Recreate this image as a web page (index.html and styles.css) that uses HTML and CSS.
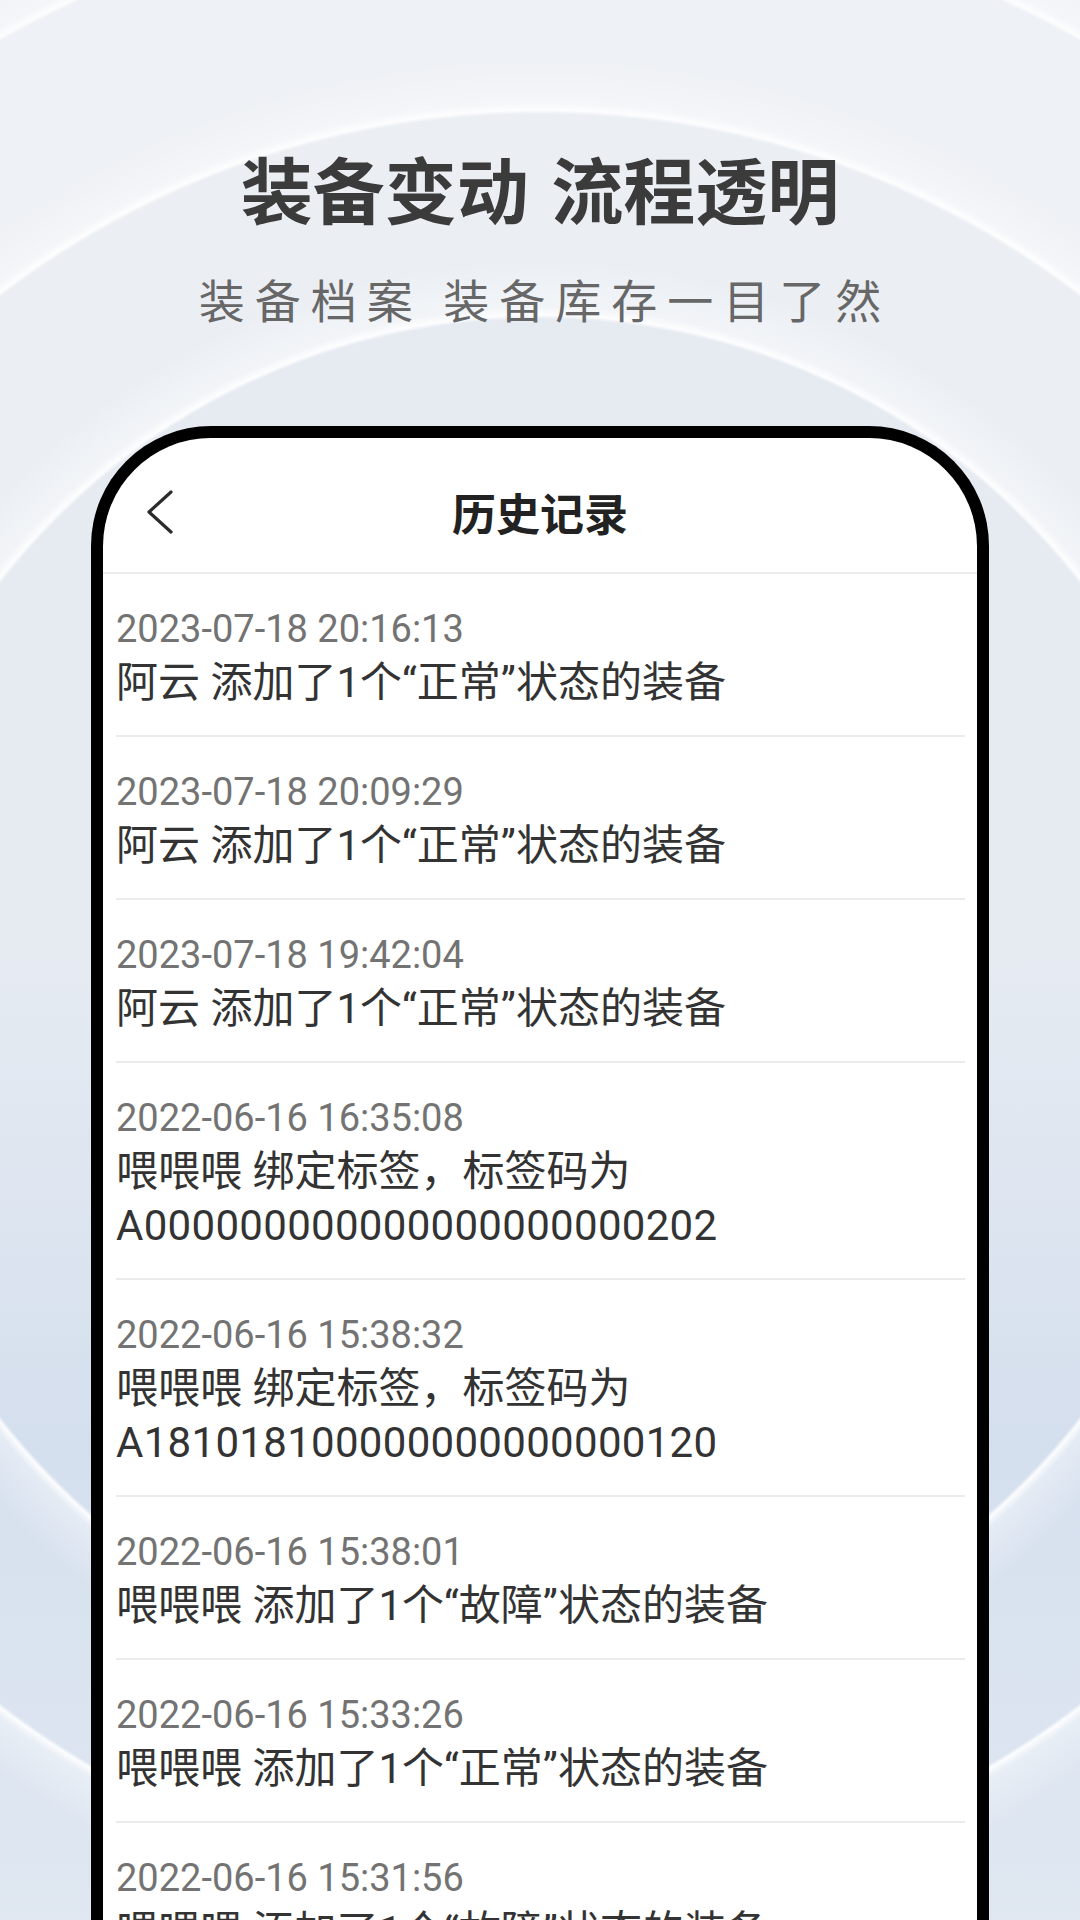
FILE: index.html
```html
<!DOCTYPE html>
<html lang="zh-CN">
<head>
  <meta charset="UTF-8" />
  <meta name="viewport" content="width=device-width, initial-scale=1" />
  <title>历史记录</title>
  <link rel="stylesheet" href="styles.css">
</head>
<body>
  <div class="intro">
    <h1 class="headline">装备变动 流程透明</h1>
    <p class="tagline">装备档案 装备库存一目了然</p>
  </div>

  <div class="phone">
    <div class="topbar">
      <a class="back" href="#">
        <svg width="28" height="44" viewBox="0 0 28 44">
          <path d="M25 2 L3 22 L25 42" fill="none" stroke="#2b2b2b" stroke-width="3.2" stroke-linecap="round" stroke-linejoin="round" />
        </svg>
      </a>
      <h2>历史记录</h2>
      <span></span>
    </div>

    <ul class="records">
      <li class="record">
        <div class="time">2023-07-18 20:16:13</div>
        <div class="desc">阿云 添加了1个“正常”状态的装备</div>
      </li>
      <li class="record">
        <div class="time">2023-07-18 20:09:29</div>
        <div class="desc">阿云 添加了1个“正常”状态的装备</div>
      </li>
      <li class="record">
        <div class="time">2023-07-18 19:42:04</div>
        <div class="desc">阿云 添加了1个“正常”状态的装备</div>
      </li>
      <li class="record">
        <div class="time">2022-06-16 16:35:08</div>
        <div class="desc">喂喂喂 绑定标签，标签码为<span class="code">A000000000000000000000202</span></div>
      </li>
      <li class="record">
        <div class="time">2022-06-16 15:38:32</div>
        <div class="desc">喂喂喂 绑定标签，标签码为<span class="code">A181018100000000000000120</span></div>
      </li>
      <li class="record">
        <div class="time">2022-06-16 15:38:01</div>
        <div class="desc">喂喂喂 添加了1个“故障”状态的装备</div>
      </li>
      <li class="record">
        <div class="time">2022-06-16 15:33:26</div>
        <div class="desc">喂喂喂 添加了1个“正常”状态的装备</div>
      </li>
      <li class="record">
        <div class="time">2022-06-16 15:31:56</div>
        <div class="desc">喂喂喂 添加了1个“故障”状态的装备</div>
      </li>
    </ul>
  </div>
</body>
</html>
```

FILE: styles.css
```css
:root {
  --texto: #333;
  --cinza: #737373;
  --linha: #ebebeb;
}
* {
  margin: 0;
  padding: 0;
  box-sizing: border-box;
}
html, body {
  width: 1080px;
  height: 1920px;
  overflow: hidden;
}
body {
  font-family: "Noto Sans CJK SC", sans-serif;
  color: var(--texto);
  background:
    radial-gradient(circle at 540px 1000px, transparent 681px, rgba(255,255,255,0.9) 685px, rgba(255,255,255,0.35) 693px, rgba(255,255,255,0) 740px),
    radial-gradient(circle at 540px 1000px, transparent 886px, rgba(255,255,255,0.9) 890px, rgba(255,255,255,0.35) 898px, rgba(255,255,255,0) 945px),
    radial-gradient(circle at 540px 1000px, transparent 1100px, rgba(255,255,255,0.85) 1104px, rgba(255,255,255,0.3) 1112px, rgba(255,255,255,0) 1160px),
    linear-gradient(to bottom, rgba(205,218,236,0) 50%, rgba(205,218,236,0.7) 75%, rgba(214,225,239,0.6) 100%),
    radial-gradient(circle at 540px 1000px, #e6ebf2 0, #e6ebf2 684px, #ebeff4 686px, #ebeff4 889px, #eef1f5 891px, #eef1f5 1103px, #f0f2f6 1105px);
}

.intro {
  padding-top: 151px;
  text-align: center;
}
.headline {
  font-size: 72px;
  line-height: 72px;
  font-weight: bold;
  word-spacing: 6px;
  color: #3b3b3b;
}
.tagline {
  margin-top: 52px;
  font-size: 46px;
  line-height: 46px;
  letter-spacing: 10px;
  padding-left: 10px;
  color: #676767;
}

.phone {
  width: 898px;
  height: 1494px;
  margin: 105px auto 0;
  border: 12px solid #000;
  border-bottom: none;
  border-radius: 120px 120px 0 0;
  background: white;
  overflow: hidden;
}

.topbar {
  height: 136px;
  padding: 13px 43px 0;
  display: grid;
  grid-template-columns: 1fr auto 1fr;
  align-items: center;
  border-bottom: 2px solid var(--linha);
}
.back {
  display: flex;
  width: 28px;
}
.topbar h2 {
  font-size: 44px;
  line-height: 44px;
  font-weight: bold;
  color: #222;
}

.records {
  list-style: none;
  padding: 0 12px 0 13px;
  font-family: Roboto, "Noto Sans CJK SC", sans-serif;
}
.record {
  padding: 28px 0 25px;
  border-bottom: 2px solid var(--linha);
}
.time {
  font-size: 38px;
  line-height: 54px;
  color: var(--cinza);
}
.desc {
  font-size: 42px;
  line-height: 54px;
  color: var(--texto);
}
.code {
  letter-spacing: 0.3px;
}
```
